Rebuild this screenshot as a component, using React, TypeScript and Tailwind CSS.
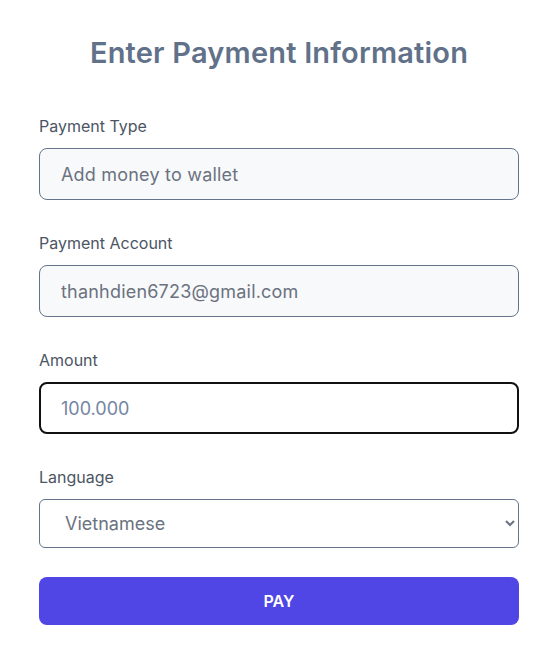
import React from "react";

const font = { fontFamily: "Inter, 'Noto Sans', sans-serif" };

function Field({ label, children }: { label: string; children: React.ReactNode }) {
  return (
    <div className="flex flex-col">
      <label className="text-[16px] leading-[24px] text-[#4b5563] mb-[10px]">{label}</label>
      {children}
    </div>
  );
}

export default function App() {
  return (
    <div className="min-h-[647px] bg-white" style={font}>
      <div className="w-[480px] ml-[39px] pt-[35px] flex flex-col">
        <h1 className="text-center text-[29px] leading-[36px] font-semibold tracking-[0.2px] text-[#617189] mb-[43px]">
          Enter Payment Information
        </h1>
        <div className="flex flex-col gap-[31px]">
          <Field label="Payment Type">
            <input
              readOnly
              value="Add money to wallet"
              className="h-[52px] rounded-lg border border-[#64748b] bg-[#f8f9fa] px-[21px] text-[18px] tracking-[0.2px] text-[#6b7280] outline-none"
            />
          </Field>
          <Field label="Payment Account">
            <input
              readOnly
              value="thanhdien6723@gmail.com"
              className="h-[52px] rounded-lg border border-[#64748b] bg-[#f8f9fa] px-[21px] text-[18px] tracking-[0.2px] text-[#6b7280] outline-none"
            />
          </Field>
          <Field label="Amount">
            <input
              placeholder="100.000"
              className="h-[52px] rounded-lg border-2 border-[#111111] bg-white px-[20px] text-[18px] text-[#6b7280] placeholder:text-[#7385a0] outline-none"
            />
          </Field>
          <Field label="Language">
            <select
              defaultValue="vi"
              className="h-[49px] rounded-md border border-[#64748b] bg-white px-[21px] text-[18px] text-[#6b7280] outline-none"
            >
              <option value="vi">Vietnamese</option>
              <option value="en">English</option>
            </select>
          </Field>
        </div>
        <button className="mt-[29px] h-[48px] rounded-lg bg-[#4f46e5] text-white text-[16px] font-semibold">
          PAY
        </button>
      </div>
    </div>
  );
}
